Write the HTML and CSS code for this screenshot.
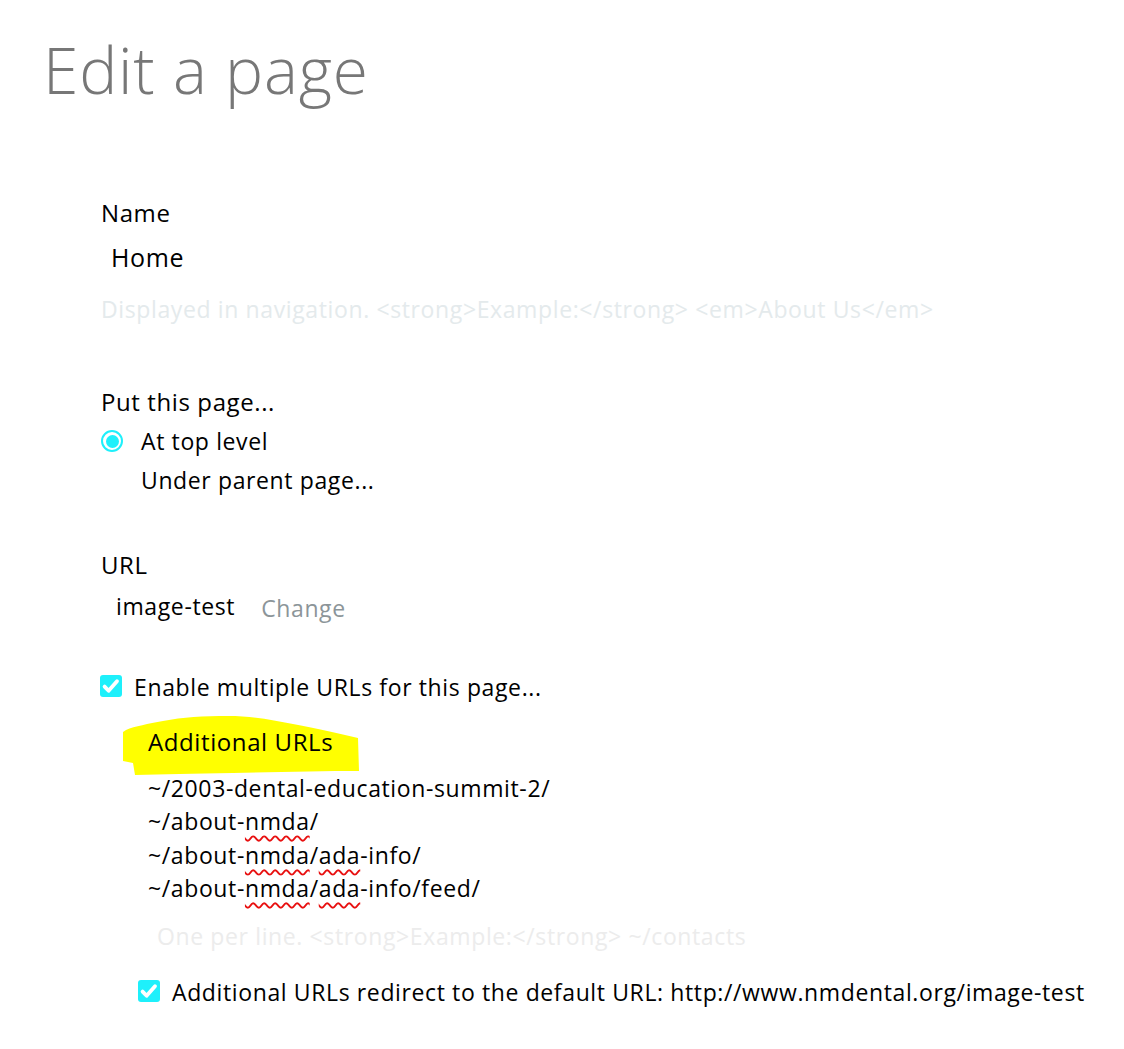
FILE: index.html
```html
<!DOCTYPE html>
<html lang="en">
<head>
<meta charset="utf-8">
<title>Edit a page</title>
<link rel="stylesheet" href="styles.css">
</head>
<body>
<div class="page">
  <h1 class="title">Edit a page</h1>
  <form class="form">
    <div class="field field-name">
      <div class="label">Name</div>
      <div class="value value-name">Home</div>
      <div class="hint">Displayed in navigation. &lt;strong&gt;Example:&lt;/strong&gt; &lt;em&gt;About Us&lt;/em&gt;</div>
    </div>

    <div class="field field-put">
      <div class="label">Put this page...</div>
      <div class="option option-first">
        <span class="radio"><span class="radio-dot"></span></span>
        <span class="option-text">At top level</span>
      </div>
      <div class="option option-second">
        <span class="radio-spacer"></span>
        <span class="option-text">Under parent page...</span>
      </div>
    </div>

    <div class="field field-url">
      <div class="label">URL</div>
      <div class="url-row">
        <span class="url-slug">image-test</span>
        <span class="url-change">Change</span>
      </div>
    </div>

    <div class="check-row check-multi">
      <span class="checkbox"><svg viewBox="0 0 22 22" width="22" height="22"><path d="M4.6 11.6 L8.6 15.8 L17 6.2" fill="none" stroke="#fff" stroke-width="3.8" stroke-linecap="round" stroke-linejoin="round"/></svg></span>
      <span class="check-text">Enable multiple URLs for this page...</span>
    </div>

    <div class="extra">
      <div class="extra-head">
        <svg class="marker" viewBox="0 0 240 62" width="240" height="62"><path d="M0 17 L3 15 C12 11 25 9 40 6 C60 2 80 1 105 1 C130 1 150 5 170 9 C195 14 215 18 235 23 L236 56 C200 56 150 57 110 58 C70 59 40 59 12 60 L10 48 L0 46 Z" fill="#ffff00"/></svg>
        <span class="extra-title">Additional URLs</span>
      </div>
      <div class="url-list">
        <div class="url-line">~/2003-dental-education-summit-2/</div>
        <div class="url-line">~/about-<span class="sp">nmda</span>/</div>
        <div class="url-line">~/about-<span class="sp">nmda</span>/<span class="sp">ada</span>-info/</div>
        <div class="url-line">~/about-<span class="sp">nmda</span>/<span class="sp">ada</span>-info/feed/</div>
      </div>
      <div class="hint hint-urls">One per line. &lt;strong&gt;Example:&lt;/strong&gt; ~/contacts</div>
      <div class="check-row check-redirect">
        <span class="checkbox"><svg viewBox="0 0 22 22" width="22" height="22"><path d="M4.6 11.6 L8.6 15.8 L17 6.2" fill="none" stroke="#fff" stroke-width="3.8" stroke-linecap="round" stroke-linejoin="round"/></svg></span>
        <span class="check-text">Additional URLs redirect to the default URL: http://www.nmdental.org/image-test</span>
      </div>
    </div>
  </form>
</div>
</body>
</html>
```

FILE: styles.css
```css
html, body {
  margin: 0;
  padding: 0;
  background: #ffffff;
}

body {
  font-family: "Open Sans", "Noto Sans", "Liberation Sans", sans-serif;
  color: #000000;
  font-size: 23px;
  letter-spacing: 0.62px;
}

.page {
  padding: 38px 0 0 43px;
}

.title {
  margin: 0;
  font-size: 64px;
  line-height: 64px;
  font-weight: 300;
  letter-spacing: 0.8px;
  color: #777777;
}

.form {
  margin: 96px 0 0 58px;
}

.label,
.value,
.hint,
.option,
.url-row,
.check-row,
.extra-head,
.url-line {
  line-height: 30px;
  white-space: nowrap;
}

.label,
.extra-title {
  font-size: 24px;
  letter-spacing: 0.6px;
}

.value-name {
  margin-top: 14px;
  padding-left: 10px;
  font-size: 25px;
  letter-spacing: 0.6px;
}

.hint {
  margin-top: 22px;
  color: #e4eaec;
}

.field-put {
  margin-top: 63px;
}

.option {
  display: flex;
  align-items: center;
  margin-top: 9px;
}

.radio,
.radio-spacer {
  width: 22px;
  height: 22px;
  flex: none;
  margin-right: 18px;
  box-sizing: border-box;
}

.radio {
  border: 2px solid #1ef0fb;
  border-radius: 50%;
  display: flex;
  align-items: center;
  justify-content: center;
}

.radio-dot {
  width: 13px;
  height: 13px;
  border-radius: 50%;
  background: #1ef0fb;
}

.field-url {
  margin-top: 55px;
}

.url-row {
  margin-top: 11px;
  padding-left: 15px;
  display: flex;
  gap: 26px;
}

.url-change {
  color: #8c9599;
  position: relative;
  top: 2px;
}

.check-row {
  display: flex;
  align-items: center;
  gap: 12px;
}

.checkbox {
  width: 22px;
  height: 22px;
  flex: none;
  border-radius: 3px;
  background: #1ef0fb;
  display: block;
  position: relative;
  top: -1px;
}

.checkbox svg {
  display: block;
}

.check-multi {
  margin-top: 51px;
  margin-left: -1px;
}

.extra {
  margin-left: 47px;
}

.extra-head {
  margin-top: 25px;
  position: relative;
}

.marker {
  position: absolute;
  left: -25px;
  top: -12px;
  z-index: 0;
}

.extra-title {
  position: relative;
  z-index: 1;
}

.url-list {
  margin-top: 15px;
}

.url-line {
  line-height: 33.3px;
}

.sp {
  text-decoration: underline wavy #e81010;
  text-decoration-thickness: 1.7px;
  text-decoration-skip-ink: none;
  text-underline-offset: 5px;
}

.hint-urls {
  margin-top: 16px;
  padding-left: 9px;
  color: #ececec;
}

.check-redirect {
  margin-top: 26px;
  margin-left: -10px;
}
```
